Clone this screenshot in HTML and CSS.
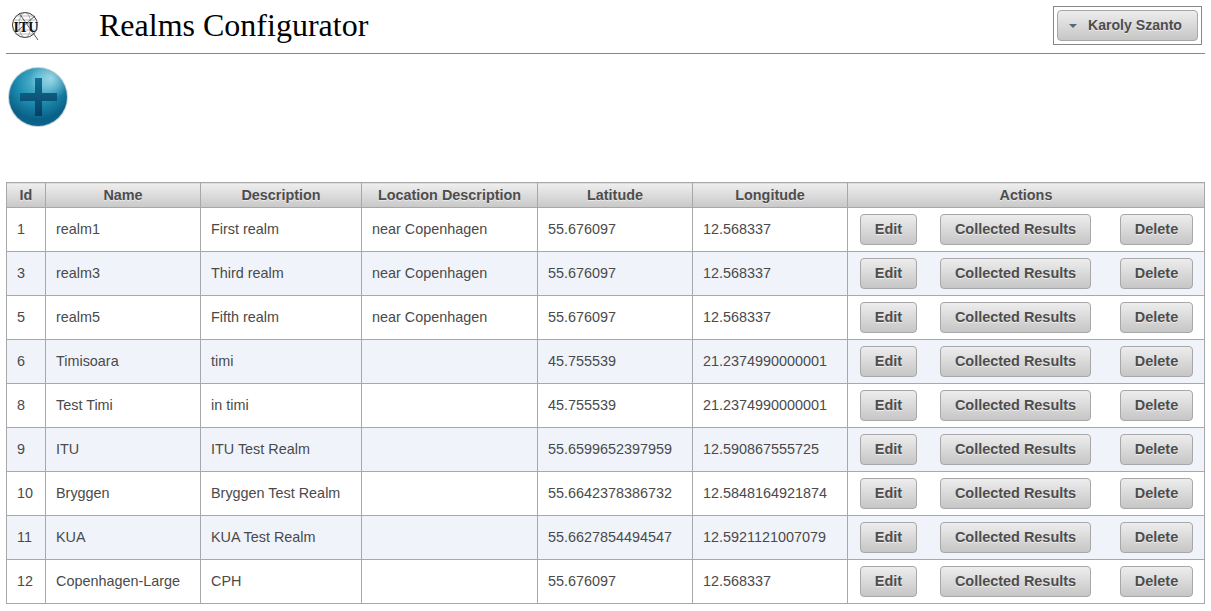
FILE: index.html
```html
<!DOCTYPE html>
<html lang="en">
<head>
<meta charset="utf-8">
<title>Realms Configurator</title>
<link rel="stylesheet" href="styles.css">
</head>
<body>
<div class="page">
  <header class="top">
    <svg class="logo" viewBox="0 0 28 30" width="28" height="30" aria-label="ITU">
      <circle cx="14" cy="14" r="12.5" fill="#fff" stroke="#333" stroke-width="1"/>
      <ellipse cx="14" cy="14" rx="6" ry="12.5" fill="none" stroke="#777" stroke-width=".6"/>
      <path d="M2 9H26M2 19H26M4.500 5H23.500M4.500 23H23.500" fill="none" stroke="#888" stroke-width=".6"/>
      <path d="M8 2 27 29M24 5 4 22" fill="none" stroke="#444" stroke-width=".9"/>
      <text x="15" y="20.500" class="logo-text" text-anchor="middle">ITU</text>
    </svg>
    <h1 class="title">Realms Configurator</h1>
    <div class="user-box">
      <button class="btn user-btn"><span class="caret"></span>Karoly Szanto</button>
    </div>
  </header>
  <div class="toolbar">
    <svg class="add" viewBox="0 0 60 60" width="60" height="60" aria-label="Add">
      <defs>
        <radialGradient id="ball" cx="50%" cy="25%" r="80%">
          <stop offset="0" stop-color="#5fbcd4"/>
          <stop offset=".45" stop-color="#1c8cb0"/>
          <stop offset=".8" stop-color="#0a5f86"/>
          <stop offset="1" stop-color="#0d6a90"/>
        </radialGradient>
        <radialGradient id="gloss" cx="72%" cy="18%" r="35%">
          <stop offset="0" stop-color="#b5e6f0" stop-opacity=".8"/>
          <stop offset="1" stop-color="#b5e6f0" stop-opacity="0"/>
        </radialGradient>
        <linearGradient id="plus" x1="0" y1="0" x2="0" y2="1">
          <stop offset="0" stop-color="#116f94"/>
          <stop offset="1" stop-color="#073f62"/>
        </linearGradient>
      </defs>
      <circle cx="30" cy="30" r="30" fill="#9fb4bd" opacity=".6"/>
      <circle cx="30" cy="30" r="29" fill="url(#ball)"/>
      <circle cx="30" cy="30" r="29" fill="url(#gloss)"/>
      <path d="M27 11H34V26H49V34H34V49H27V34H12V26H27Z" fill="url(#plus)"/>
    </svg>
  </div>
  <table class="realms">
    <colgroup>
      <col class="c-id"><col class="c-name"><col class="c-desc"><col class="c-loc"><col class="c-lat"><col class="c-lon"><col class="c-act">
    </colgroup>
    <thead>
      <tr><th>Id</th><th>Name</th><th>Description</th><th>Location Description</th><th>Latitude</th><th>Longitude</th><th>Actions</th></tr>
    </thead>
    <tbody>
      <tr><td>1</td><td>realm1</td><td>First realm</td><td>near Copenhagen</td><td>55.676097</td><td>12.568337</td><td class="acts"><div class="act-row"><button class="btn b-edit">Edit</button><button class="btn b-res">Collected Results</button><button class="btn b-del">Delete</button></div></td></tr>
      <tr><td>3</td><td>realm3</td><td>Third realm</td><td>near Copenhagen</td><td>55.676097</td><td>12.568337</td><td class="acts"><div class="act-row"><button class="btn b-edit">Edit</button><button class="btn b-res">Collected Results</button><button class="btn b-del">Delete</button></div></td></tr>
      <tr><td>5</td><td>realm5</td><td>Fifth realm</td><td>near Copenhagen</td><td>55.676097</td><td>12.568337</td><td class="acts"><div class="act-row"><button class="btn b-edit">Edit</button><button class="btn b-res">Collected Results</button><button class="btn b-del">Delete</button></div></td></tr>
      <tr><td>6</td><td>Timisoara</td><td>timi</td><td></td><td>45.755539</td><td>21.2374990000001</td><td class="acts"><div class="act-row"><button class="btn b-edit">Edit</button><button class="btn b-res">Collected Results</button><button class="btn b-del">Delete</button></div></td></tr>
      <tr><td>8</td><td>Test Timi</td><td>in timi</td><td></td><td>45.755539</td><td>21.2374990000001</td><td class="acts"><div class="act-row"><button class="btn b-edit">Edit</button><button class="btn b-res">Collected Results</button><button class="btn b-del">Delete</button></div></td></tr>
      <tr><td>9</td><td>ITU</td><td>ITU Test Realm</td><td></td><td>55.6599652397959</td><td>12.590867555725</td><td class="acts"><div class="act-row"><button class="btn b-edit">Edit</button><button class="btn b-res">Collected Results</button><button class="btn b-del">Delete</button></div></td></tr>
      <tr><td>10</td><td>Bryggen</td><td>Bryggen Test Realm</td><td></td><td>55.6642378386732</td><td>12.5848164921874</td><td class="acts"><div class="act-row"><button class="btn b-edit">Edit</button><button class="btn b-res">Collected Results</button><button class="btn b-del">Delete</button></div></td></tr>
      <tr><td>11</td><td>KUA</td><td>KUA Test Realm</td><td></td><td>55.6627854494547</td><td>12.5921121007079</td><td class="acts"><div class="act-row"><button class="btn b-edit">Edit</button><button class="btn b-res">Collected Results</button><button class="btn b-del">Delete</button></div></td></tr>
      <tr><td>12</td><td>Copenhagen-Large</td><td>CPH</td><td></td><td>55.676097</td><td>12.568337</td><td class="acts"><div class="act-row"><button class="btn b-edit">Edit</button><button class="btn b-res">Collected Results</button><button class="btn b-del">Delete</button></div></td></tr>
    </tbody>
  </table>
</div>
</body>
</html>
```
FILE: styles.css
```css
* { box-sizing: border-box; }
html, body { margin: 0; padding: 0; background: #fff; }
body { font-family: "Liberation Sans", Arial, sans-serif; overflow: hidden; }
.page { width: 1199px; margin-left: 6px; }

.top {
  display: flex;
  align-items: flex-start;
  height: 54px;
  border-bottom: 1px solid #888;
}
.logo { margin: 11px 0 0 5px; flex: none; }
.logo-text { font: bold 14px "Liberation Serif", serif; fill: #111; stroke: #fff; stroke-width: .4px; paint-order: stroke; }
.title {
  margin: 6px 0 0 60px;
  font: normal 32px/38px "Liberation Serif", "Times New Roman", serif;
  color: #000;
}
.user-box {
  margin: 6px 3px 0 auto;
  width: 149px;
  height: 39px;
  border: 1px solid #888;
  padding: 3px 3px 0 3px;
}
.btn {
  display: block;
  margin: 0;
  padding: 0;
  height: 31px;
  border: 1px solid #a8a8a8;
  border-radius: 4px;
  background: linear-gradient(#ededed, #c6c6c6);
  font: bold 14.45px/29px "Liberation Sans", Arial, sans-serif;
  color: #4d4d4d;
  text-shadow: 0 1px 0 rgba(255,255,255,.6);
  text-align: center;
  flex: none;
}
.user-btn { width: 141px; text-align: left; padding-left: 11px; font-size: 14.1px; }
.caret {
  display: inline-block;
  width: 0;
  height: 0;
  border: 4px solid transparent;
  border-top: 4px solid #4e6a7d;
  border-bottom: 0;
  margin-right: 11px;
  vertical-align: 2px;
}

.toolbar { height: 128px; padding: 13px 0 0 2px; }
.add { display: block; }

.realms {
  width: 1198px;
  table-layout: fixed;
  border-collapse: collapse;
  font-size: 14.4px;
  color: #4a4a4a;
}
.c-id { width: 39px; }
.c-name { width: 155px; }
.c-desc { width: 161px; }
.c-loc { width: 176px; }
.c-lat { width: 155px; }
.c-lon { width: 155px; }
.c-act { width: 357px; }
.realms th, .realms td { border: 1px solid #a8a8a8; }
.realms th {
  height: 25px;
  padding: 0;
  background: linear-gradient(#efefef, #c8c8c8);
  font-weight: bold;
  line-height: 23px;
  color: #4d4d4d;
  text-shadow: 0 1px 0 rgba(255,255,255,.5);
  text-align: center;
}
.realms td {
  height: 44px;
  padding: 0 10px 2px;
  line-height: 20px;
  white-space: nowrap;
  overflow: hidden;
  vertical-align: middle;
}
.realms tbody tr:nth-child(even) td { background: #f0f4fa; }
.realms td.acts { padding: 0 11px 0 12px; }
.act-row { display: flex; align-items: center; gap: 23px; }
.b-edit { width: 57px; }
.b-res { width: 151px; }
.b-del { width: 73px; margin-left: 6px; }
```
